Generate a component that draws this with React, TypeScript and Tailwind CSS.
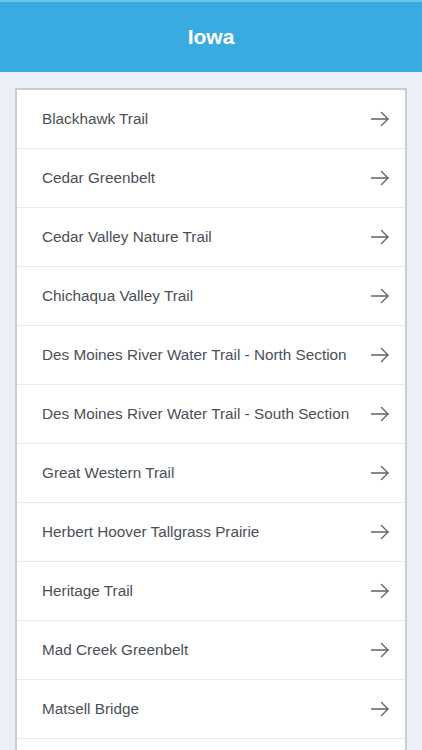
import React from "react";

const trails = [
  "Blackhawk Trail",
  "Cedar Greenbelt",
  "Cedar Valley Nature Trail",
  "Chichaqua Valley Trail",
  "Des Moines River Water Trail - North Section",
  "Des Moines River Water Trail - South Section",
  "Great Western Trail",
  "Herbert Hoover Tallgrass Prairie",
  "Heritage Trail",
  "Mad Creek Greenbelt",
  "Matsell Bridge",
];

function Arrow() {
  return (
    <svg width="20" height="16" viewBox="0 0 20 16" fill="none" stroke="#5f646b" strokeWidth="1.4" strokeLinecap="round" strokeLinejoin="round">
      <path d="M1.5 8H18" />
      <path d="M11.5 1.5L18 8L11.5 14.5" />
    </svg>
  );
}

export default function App() {
  return (
    <div className="w-[422px] h-[750px] overflow-hidden bg-[#ebeff6]" style={{ fontFamily: "'Liberation Sans', Arial, sans-serif" }}>
      <div className="h-[72px] bg-[#3aabe1] border-t-2 border-[#6cc3ee] flex items-center justify-center">
        <span className="text-white text-[21px] font-bold">Iowa</span>
      </div>
      <div className="px-[15px] pt-[16px]">
        <div className="bg-white border-2 border-[#c9ced6] border-b-0">
          {trails.map((t) => (
            <div key={t} className="h-[59px] flex items-center justify-between pl-[25px] pr-[15px] border-b border-[#e8ebef]">
              <span className="text-[15.3px] text-[#4a4f57] leading-none">{t}</span>
              <Arrow />
            </div>
          ))}
          <div className="h-[59px]" />
        </div>
      </div>
    </div>
  );
}
